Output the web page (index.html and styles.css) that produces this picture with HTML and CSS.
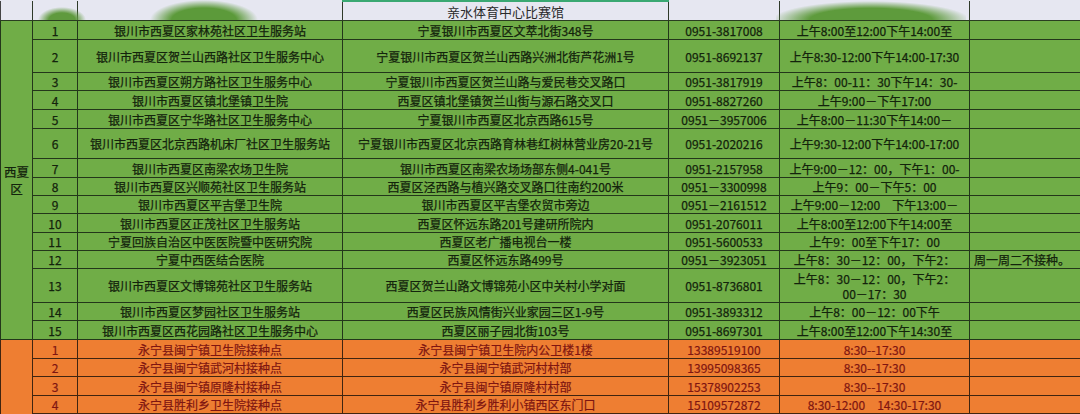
FILE: index.html
```html
<!DOCTYPE html>
<html lang="zh-CN">
<head>
<meta charset="utf-8">
<title>接种点</title>
<link rel="stylesheet" href="styles.css">
</head>
<body>
<div class="sheet">
<table class="grid">
  <colgroup>
    <col class="c-dist"><col class="c-no"><col class="c-name"><col class="c-addr"><col class="c-tel"><col class="c-time"><col class="c-note">
  </colgroup>
  <tr class="head">
    <td></td><td></td><td></td><td class="sel">亲水体育中心比赛馆</td><td></td><td></td><td></td>
  </tr>
  <tr class="g h19"><td class="dist" rowspan="15">西夏区</td><td>1</td><td>银川市西夏区家林苑社区卫生服务站</td><td>宁夏银川市西夏区文萃北街348号</td><td>0951-3817008</td><td>上午8:00至12:00下午14:00至</td><td></td></tr>
  <tr class="g h33"><td>2</td><td>银川市西夏区贺兰山西路社区卫生服务中心</td><td>宁夏银川市西夏区贺兰山西路兴洲北街芦花洲1号</td><td>0951-8692137</td><td>上午8:30-12:00下午14:00-17:30</td><td></td></tr>
  <tr class="g h18"><td>3</td><td>银川市西夏区朔方路社区卫生服务中心</td><td>宁夏银川市西夏区贺兰山路与爱民巷交叉路口</td><td>0951-3817919</td><td>上午8：00-11：30下午14：30-</td><td></td></tr>
  <tr class="g h19"><td>4</td><td>银川市西夏区镇北堡镇卫生院</td><td>西夏区镇北堡镇贺兰山街与源石路交叉口</td><td>0951-8827260</td><td>上午9:00－下午17:00</td><td></td></tr>
  <tr class="g h19"><td>5</td><td>银川市西夏区宁华路社区卫生服务中心</td><td>宁夏银川市西夏区北京西路615号</td><td>0951－3957006</td><td>上午8:00－11:30下午14:00－</td><td></td></tr>
  <tr class="g h30"><td>6</td><td>银川市西夏区北京西路机床厂社区卫生服务站</td><td>宁夏银川市西夏区北京西路育林巷红树林营业房20-21号</td><td>0951-2020216</td><td>上午9:30-12:00下午14:00-17:00</td><td></td></tr>
  <tr class="g h19"><td>7</td><td>银川市西夏区南梁农场卫生院</td><td>银川市西夏区南梁农场场部东侧4-041号</td><td>0951-2157958</td><td>上午9:00－12：00，下午1：00-</td><td></td></tr>
  <tr class="g h18"><td>8</td><td>银川市西夏区兴顺苑社区卫生服务站</td><td>西夏区泾西路与植兴路交叉路口往南约200米</td><td>0951－3300998</td><td>上午9：00－下午5：00</td><td></td></tr>
  <tr class="g h18"><td>9</td><td>银川市西夏区平吉堡卫生院</td><td>银川市西夏区平吉堡农贸市旁边</td><td>0951－2161512</td><td>上午9:00－12:00&emsp;下午13:00－</td><td></td></tr>
  <tr class="g h19"><td>10</td><td>银川市西夏区正茂社区卫生服务站</td><td>西夏区怀远东路201号建研所院内</td><td>0951-2076011</td><td>上午8:00至12:00下午14:00至</td><td></td></tr>
  <tr class="g h18"><td>11</td><td>宁夏回族自治区中医医院暨中医研究院</td><td>西夏区老广播电视台一楼</td><td>0951-5600533</td><td>上午9：00至下午17：00</td><td></td></tr>
  <tr class="g h18"><td>12</td><td>宁夏中西医结合医院</td><td>西夏区怀远东路499号</td><td>0951－3923051</td><td>上午8：30－12：00，下午2：</td><td class="note">周一周二不接种。</td></tr>
  <tr class="g h34"><td>13</td><td>银川市西夏区文博锦苑社区卫生服务站</td><td>西夏区贺兰山路文博锦苑小区中关村小学对面</td><td>0951-8736801</td><td>上午8：30－12：00，下午2：<br>00－17：30</td><td></td></tr>
  <tr class="g h18"><td>14</td><td>银川市西夏区梦园社区卫生服务站</td><td>西夏区民族风情街兴业家园三区1-9号</td><td>0951-3893312</td><td>上午8：00－12：00下午</td><td></td></tr>
  <tr class="g h19"><td>15</td><td>银川市西夏区西花园路社区卫生服务中心</td><td>西夏区丽子园北街103号</td><td>0951-8697301</td><td>上午8:00至12:00下午14:30至</td><td></td></tr>
  <tr class="o h19"><td class="dist" rowspan="5"></td><td>1</td><td>永宁县闽宁镇卫生院接种点</td><td>永宁县闽宁镇卫生院内公卫楼1楼</td><td>13389519100</td><td>8:30--17:30</td><td></td></tr>
  <tr class="o h18"><td>2</td><td>永宁县闽宁镇武河村接种点</td><td>永宁县闽宁镇武河村村部</td><td>13995098365</td><td>8:30--17:30</td><td></td></tr>
  <tr class="o h19"><td>3</td><td>永宁县闽宁镇原隆村接种点</td><td>永宁县闽宁镇原隆村村部</td><td>15378902253</td><td>8:30--17:30</td><td></td></tr>
  <tr class="o h18"><td>4</td><td>永宁县胜利乡卫生院接种点</td><td>永宁县胜利乡胜利小镇西区东门口</td><td>15109572872</td><td>8:30-12:00&emsp;14:30-17:30</td><td></td></tr>
  <tr class="o h18"><td></td><td></td><td></td><td></td><td></td><td></td></tr>
</table>
<div class="smudge s1"></div>
<div class="smudge s2"></div>
<div class="smudge s3"></div>
</div>
</body>
</html>
```

FILE: styles.css
```css
html, body {
  margin: 0;
  padding: 0;
  background: #e6e7f1;
}
.sheet {
  position: relative;
  width: 1080px;
  height: 414px;
  overflow: hidden;
}
.grid {
  width: 1080px;
  table-layout: fixed;
  border-collapse: collapse;
  font-family: "Noto Sans CJK SC", "Noto Sans", sans-serif;
  font-size: 12px;
  line-height: 15px;
}
.c-dist { width: 32px; }
.c-no { width: 45px; }
.c-name { width: 265px; }
.c-addr { width: 326px; }
.c-tel { width: 111px; }
.c-time { width: 190px; }
.c-note { width: 111px; }

.grid td {
  padding: 0 2px;
  text-align: center;
  vertical-align: middle;
  white-space: nowrap;
  overflow: hidden;
}
.head td {
  height: 18px;
  background: #e6e7f1;
  color: #2a2a2a;
  font-size: 13px;
  border-left: 1px solid #2f3a2a;
  border-right: 1px solid #2f3a2a;
  border-bottom: 1px solid #2a3d20;
}
.head td:first-child { border-left: 1px solid #444; }
.head td.sel { border-top: 2px solid #3aa872; }

.g td {
  background: #70ad47;
  color: #13230c;
  border: 1px solid #23361a;
  -webkit-text-stroke: 0.25px #13230c;
}
.o td {
  background: #ee7e32;
  color: #7e1511;
  border: 1px solid #3f2410;
  -webkit-text-stroke: 0.2px #7e1511;
}
.g td.dist, .o td.dist {
  white-space: normal;
  font-size: 12.5px;
  line-height: 17px;
  padding: 0;
  color: #13230c;
}
.grid td.note { text-align: left; padding-left: 4px; }

.h18 td { height: 17px; }
.h19 td { height: 18px; }
.h30 td { height: 29px; }
.h33 td { height: 32px; }
.h34 td { height: 33px; }

.smudge {
  position: absolute;
  pointer-events: none;
}
.s1 {
  left: 38px; top: 7px; width: 48px; height: 13px;
  background: radial-gradient(ellipse 50% 100% at 50% 100%, #5f9a3e 55%, rgba(95,154,62,0) 100%);
}
.s2 {
  left: 150px; top: 0; width: 108px; height: 20px;
  background: radial-gradient(ellipse 50% 100% at 50% 100%, #5c9a3a 60%, rgba(92,154,58,0) 100%);
}
.s3 {
  left: 776px; top: 0; width: 190px; height: 20px;
  background: radial-gradient(ellipse 52% 95% at 50% 100%, #5e9b3c 62%, rgba(94,155,60,0) 100%);
}
```
